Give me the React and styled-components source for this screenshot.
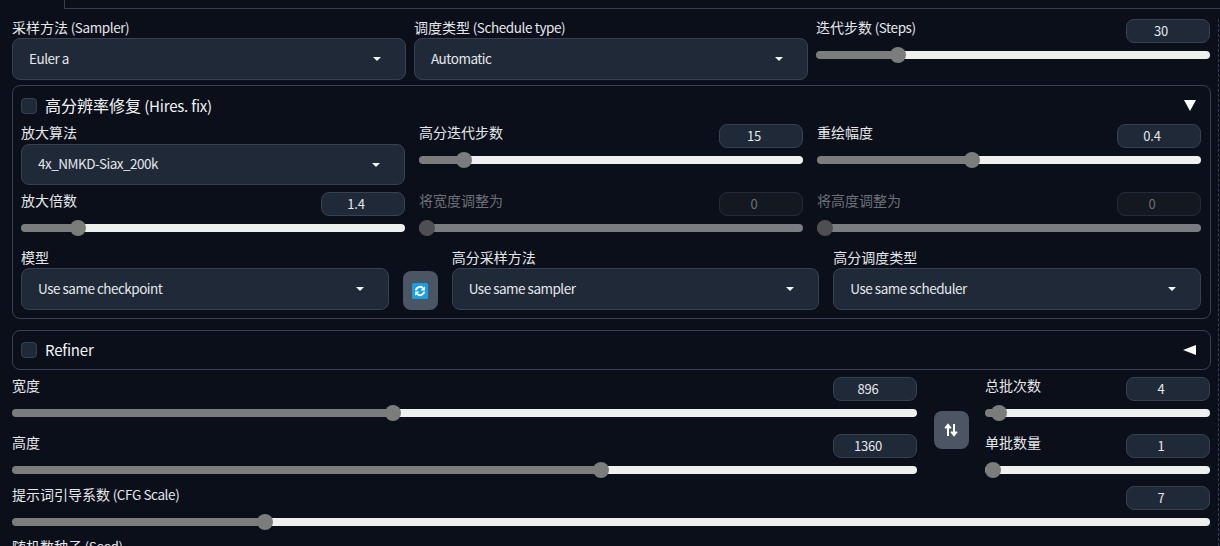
import React from 'react'
import styled, { createGlobalStyle } from 'styled-components'

const GlobalStyle = createGlobalStyle`
  html, body {
    margin: 0;
    height: 546px;
    overflow: hidden;
    background: #0b0f19;
  }
  * {
    box-sizing: border-box;
  }
`

const Page = styled.div`
  width: 1220px;
  height: 546px;
  overflow: hidden;
  background: #0b0f19;
  color: #e5e7eb;
  font-family: "Noto Sans CJK SC", "Noto Sans", sans-serif;
  font-size: 14px;
`

const TabEdge = styled.div`
  height: 9px;
  margin-left: 64px;
  border-left: 1px solid #374151;
  border-bottom: 1px solid #374151;
`

const Content = styled.div`
  height: 527px;
  margin: 10px 1px 0 0;
  padding: 0 8px 0 12px;
  border-right: 1px dashed #374151;
`

const TopRow = styled.div`
  display: grid;
  grid-template-columns: repeat(3, 1fr);
  gap: 8px;
  margin-bottom: 5px;
`

const Panel = styled.section`
  border: 1px solid #374151;
  border-radius: 8px;
  padding: ${p => (p.$collapsed ? '0 9px 0 8px' : '0 9px 8px 8px')};
  height: ${p => (p.$collapsed ? '40px' : 'auto')};
  margin-right: -1px;
  margin-bottom: ${p => (p.$collapsed ? '7px' : '11px')};
  display: flex;
  flex-direction: column;
  justify-content: ${p => (p.$collapsed ? 'center' : 'flex-start')};
`

const PanelHead = styled.div`
  display: flex;
  align-items: center;
  justify-content: space-between;
  padding-right: 5px;
  height: ${p => (p.$collapsed ? 'auto' : '38px')};
  padding-top: ${p => (p.$collapsed ? '0' : '1px')};
`

const PanelTitle = styled.label`
  display: flex;
  align-items: center;
  gap: 8px;
  font-size: 16px;
  line-height: 20px;
  color: #f3f4f6;
`

const Checkbox = styled.span`
  width: 16px;
  height: 16px;
  border-radius: 4px;
  border: 1px solid #374151;
  background: #1f2937;
`

const Triangle = styled.span`
  width: 0;
  height: 0;
  ${p => (p.$dir === 'down'
    ? `border-left: 6.5px solid transparent;
       border-right: 6.5px solid transparent;
       border-top: 11px solid #fff;`
    : `border-top: 5.5px solid transparent;
       border-bottom: 5.5px solid transparent;
       border-right: 13px solid #fff;`)}
`

const Grid3 = styled.div`
  display: grid;
  grid-template-columns: repeat(3, 1fr);
  gap: 14px;
  margin-bottom: 7px;
`

const ModelRow = styled.div`
  display: grid;
  grid-template-columns: 1fr 35px 1fr 1fr;
  gap: 14px;
  align-items: end;
  margin-top: 6px;
`

const Label = styled.span`
  display: block;
  font-size: 14px;
  line-height: 17px;
  margin-bottom: 2px;
  color: ${p => (p.$disabled ? '#6b7078' : '#e5e7eb')};
`

// the latin part of a label runs narrower than the CJK font's own latin glyphs
const Latin = styled.span`
  font-size: 13.5px;
  letter-spacing: -0.4px;
`

const TitleLatin = styled.span`
  font-size: 15px;
  letter-spacing: -0.2px;
`

const SelectBox = styled.div`
  height: ${p => (p.$short ? '41px' : '42px')};
  margin-top: ${p => (p.$short ? '1px' : '0')};
  display: flex;
  align-items: center;
  justify-content: space-between;
  padding: 0 24px 3px 16px;
  border: 1px solid #374151;
  border-radius: 8px;
  background: #202937;
  font-size: 13.5px;
  letter-spacing: -0.5px;
  color: #e5e7eb;
`

const Caret = styled.span`
  width: 0;
  height: 0;
  margin-top: 3px;
  border-left: 4px solid transparent;
  border-right: 4px solid transparent;
  border-top: 4.5px solid #f3f4f6;
`

const FieldWrap = styled.div`
  display: flex;
  flex-direction: column;
`

const SliderWrap = styled.div`
  display: flex;
  flex-direction: column;
  gap: 4px;
`

const SliderHead = styled.div`
  height: 24px;
  display: flex;
  align-items: flex-start;
  justify-content: space-between;
`

const NumberBox = styled.input`
  width: 84px;
  height: 24px;
  padding: 0 14px 2px 0;
  border: 1px solid ${p => (p.disabled ? '#252b36' : '#374151')};
  border-radius: 8px;
  background: ${p => (p.disabled ? '#141821' : '#1f2937')};
  color: ${p => (p.disabled ? '#6b7078' : '#e5e7eb')};
  font-family: inherit;
  font-size: 13px;
  letter-spacing: -0.25px;
  line-height: 20px;
  text-align: center;
  outline: none;
`

const Range = styled.input`
  -webkit-appearance: none;
  appearance: none;
  display: block;
  width: 100%;
  height: 16px;
  margin: 0;
  background: transparent;

  &::-webkit-slider-runnable-track {
    height: 8px;
    border-radius: 4px;
    background: ${p => (p.disabled
      ? '#7b7b82'
      : 'linear-gradient(to right, #7b7d7d var(--fill), #eef0ee var(--fill))')};
  }
  &::-webkit-slider-thumb {
    -webkit-appearance: none;
    width: 16px;
    height: 16px;
    margin-top: -4px;
    border-radius: 50%;
    background: ${p => (p.disabled ? '#4e4f53' : '#7b7d7d')};
  }
`

const IconButton = styled.button`
  width: 35px;
  height: ${p => (p.$tall ? '38px' : '39px')};
  margin-top: ${p => (p.$tall ? '5px' : '0')};
  padding: 0;
  display: flex;
  align-items: center;
  justify-content: center;
  border: none;
  border-radius: 8px;
  background: #4b5563;
`

const SizeRow = styled.div`
  display: grid;
  grid-template-columns: 905px 35px 225px;
  column-gap: 16.5px;
  align-items: center;
  margin-bottom: 8px;
`

const Stack = styled.div`
  display: flex;
  flex-direction: column;
  gap: 13px;
`

const SeedLabel = styled(Label)`
  margin-top: 8px;
`

function Slider({ label, en, value, min, max, disabled }) {
  const fill = ((value - min) / (max - min)) * 100
  return (
    <SliderWrap>
      <SliderHead>
        <Label $disabled={disabled}>{label}{en && <Latin> {en}</Latin>}</Label>
        <NumberBox readOnly disabled={disabled} value={value} />
      </SliderHead>
      <Range
        type="range"
        readOnly
        disabled={disabled}
        min={min}
        max={max}
        step="any"
        value={value}
        style={{ '--fill': `${fill}%` }}
      />
    </SliderWrap>
  )
}

function Select({ label, en, value, short }) {
  return (
    <FieldWrap>
      <Label>{label}{en && <Latin> {en}</Latin>}</Label>
      <SelectBox $short={short}>
        <span>{value}</span>
        <Caret />
      </SelectBox>
    </FieldWrap>
  )
}

function RefreshIcon() {
  return (
    <svg width="16" height="16" viewBox="0 0 16 16">
      <rect width="16" height="16" rx="1.5" fill="#1a9fdf" />
      <path d="M3.8 7.4A4.2 4.2 0 0 1 10.8 5" fill="none" stroke="#fff" strokeWidth="2" />
      <path d="M12.8 3.2v4.2H8.6z" fill="#fff" />
      <path d="M12.2 8.6A4.2 4.2 0 0 1 5.2 11" fill="none" stroke="#fff" strokeWidth="2" />
      <path d="M3.2 12.8V8.6h4.2z" fill="#fff" />
    </svg>
  )
}

function SwapIcon() {
  return (
    <svg width="14" height="14" viewBox="0 0 14 14">
      <path d="M4 13V3M1.2 5.4 4 1.8l2.8 3.6" fill="none" stroke="#fff" strokeWidth="2" />
      <path d="M10 1v10M7.2 8.6 10 12.2l2.8-3.6" fill="none" stroke="#fff" strokeWidth="2" />
    </svg>
  )
}

export default function App() {
  return (
    <Page>
      <GlobalStyle />
      <TabEdge />
      <Content>
        <TopRow>
          <Select label="采样方法" en="(Sampler)" value="Euler a" />
          <Select label="调度类型" en="(Schedule type)" value="Automatic" />
          <Slider label="迭代步数" en="(Steps)" value={30} min={1} max={150} />
        </TopRow>

        <Panel>
          <PanelHead>
            <PanelTitle>
              <Checkbox />
              <span>高分辨率修复<TitleLatin> (Hires. fix)</TitleLatin></span>
            </PanelTitle>
            <Triangle $dir="down" />
          </PanelHead>
          <Grid3>
            <Select label="放大算法" value="4x_NMKD-Siax_200k" short />
            <Slider label="高分迭代步数" value={15} min={0} max={150} />
            <Slider label="重绘幅度" value={0.4} min={0} max={1} />
          </Grid3>
          <Grid3>
            <Slider label="放大倍数" value={1.4} min={1} max={4} />
            <Slider label="将宽度调整为" value={0} min={0} max={2048} disabled />
            <Slider label="将高度调整为" value={0} min={0} max={2048} disabled />
          </Grid3>
          <ModelRow>
            <Select label="模型" value="Use same checkpoint" />
            <IconButton><RefreshIcon /></IconButton>
            <Select label="高分采样方法" value="Use same sampler" />
            <Select label="高分调度类型" value="Use same scheduler" />
          </ModelRow>
        </Panel>

        <Panel $collapsed>
          <PanelHead $collapsed>
            <PanelTitle>
              <Checkbox />
              <TitleLatin>Refiner</TitleLatin>
            </PanelTitle>
            <Triangle $dir="left" />
          </PanelHead>
        </Panel>

        <SizeRow>
          <Stack>
            <Slider label="宽度" value={896} min={64} max={2048} />
            <Slider label="高度" value={1360} min={64} max={2048} />
          </Stack>
          <IconButton $tall><SwapIcon /></IconButton>
          <Stack>
            <Slider label="总批次数" value={4} min={1} max={100} />
            <Slider label="单批数量" value={1} min={1} max={8} />
          </Stack>
        </SizeRow>

        <Slider label="提示词引导系数" en="(CFG Scale)" value={7} min={1} max={30} />
        <SeedLabel>随机数种子<Latin> (Seed)</Latin></SeedLabel>
      </Content>
    </Page>
  )
}
